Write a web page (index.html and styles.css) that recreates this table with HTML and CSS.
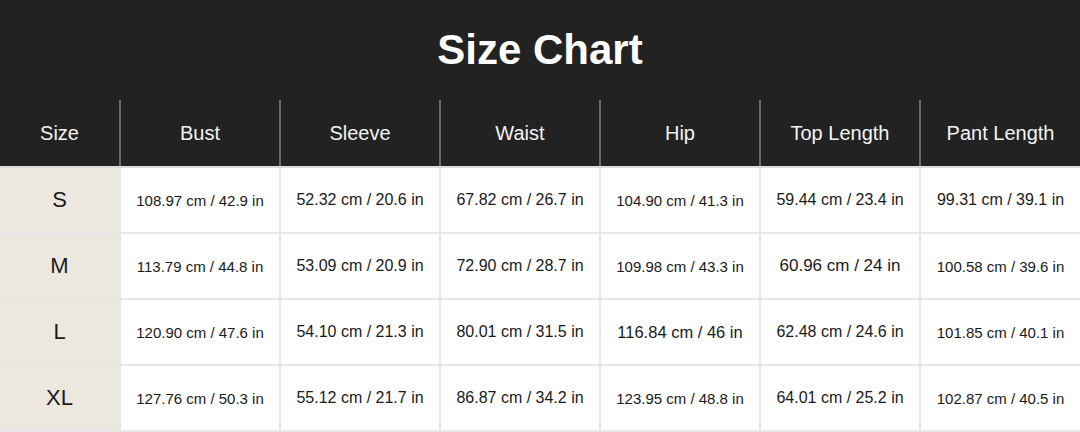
FILE: index.html
```html
<!DOCTYPE html>
<html lang="en">
<head>
    <meta charset="UTF-8">
    <meta name="viewport" content="width=device-width, initial-scale=1.0">
    <title>Size Chart</title>
    <link rel="stylesheet" href="styles.css">
</head>
<body>
    <div class="chart">
        <h1 class="chart-title">Size Chart</h1>
        <table>
            <colgroup>
                <col class="col-size">
                <col><col><col><col><col><col>
            </colgroup>
            <!-- Header -->
            <tr class="head-row">
                <th>Size</th>
                <th>Bust</th>
                <th>Sleeve</th>
                <th>Waist</th>
                <th>Hip</th>
                <th>Top Length</th>
                <th>Pant Length</th>
            </tr>
            <!-- S -->
            <tr>
                <td class="size">S</td>
                <td class="sm">108.97 cm / 42.9 in</td>
                <td>52.32 cm / 20.6 in</td>
                <td>67.82 cm / 26.7 in</td>
                <td class="sm">104.90 cm / 41.3 in</td>
                <td>59.44 cm / 23.4 in</td>
                <td>99.31 cm / 39.1 in</td>
            </tr>
            <!-- M -->
            <tr>
                <td class="size">M</td>
                <td class="sm">113.79 cm / 44.8 in</td>
                <td>53.09 cm / 20.9 in</td>
                <td>72.90 cm / 28.7 in</td>
                <td class="sm">109.98 cm / 43.3 in</td>
                <td class="lg">60.96 cm / 24 in</td>
                <td class="sm">100.58 cm / 39.6 in</td>
            </tr>
            <!-- L -->
            <tr>
                <td class="size">L</td>
                <td class="sm">120.90 cm / 47.6 in</td>
                <td>54.10 cm / 21.3 in</td>
                <td>80.01 cm / 31.5 in</td>
                <td class="md">116.84 cm / 46 in</td>
                <td>62.48 cm / 24.6 in</td>
                <td class="sm">101.85 cm / 40.1 in</td>
            </tr>
            <!-- XL -->
            <tr>
                <td class="size">XL</td>
                <td class="sm">127.76 cm / 50.3 in</td>
                <td>55.12 cm / 21.7 in</td>
                <td>86.87 cm / 34.2 in</td>
                <td class="sm">123.95 cm / 48.8 in</td>
                <td>64.01 cm / 25.2 in</td>
                <td class="sm">102.87 cm / 40.5 in</td>
            </tr>
        </table>
    </div>
</body>
</html>
```

FILE: styles.css
```css
body {
    font-family: 'Liberation Sans', Arial, sans-serif;
    margin: 0;
    padding: 0;
    background-color: white;
    color: #1a1a1a;
}

.chart {
    width: 1080px;
}

.chart-title {
    margin: 0;
    height: 100px;
    line-height: 100px;
    text-align: center;
    font-size: 42px;
    font-weight: bold;
    color: white;
    background-color: #222222;
}

table {
    width: 1080px;
    border-collapse: collapse;
    table-layout: fixed;
}

col {
    width: 160px;
}

col.col-size {
    width: 120px;
}

th, td {
    padding: 0;
    text-align: center;
}

.head-row {
    background-color: #222222;
    height: 67px;
}

.head-row th {
    font-size: 20px;
    font-weight: normal;
    color: #f4f4f4;
    border-left: 2px solid #6b6b6b;
    border-bottom: 2px solid #dcdcdc;
}

.head-row th:first-child {
    border-left: none;
}

td {
    height: 64px;
    font-size: 16px;
    border-right: 2px solid #e6e6e6;
    border-bottom: 2px solid #e6e6e6;
}

td:last-child {
    border-right: none;
}

td.size {
    background-color: #ece8df; /* beige size column */
    font-size: 22px;
}

td.sm {
    font-size: 15px;
}

td.md {
    font-size: 16.5px;
}

td.lg {
    font-size: 17px;
}
```
